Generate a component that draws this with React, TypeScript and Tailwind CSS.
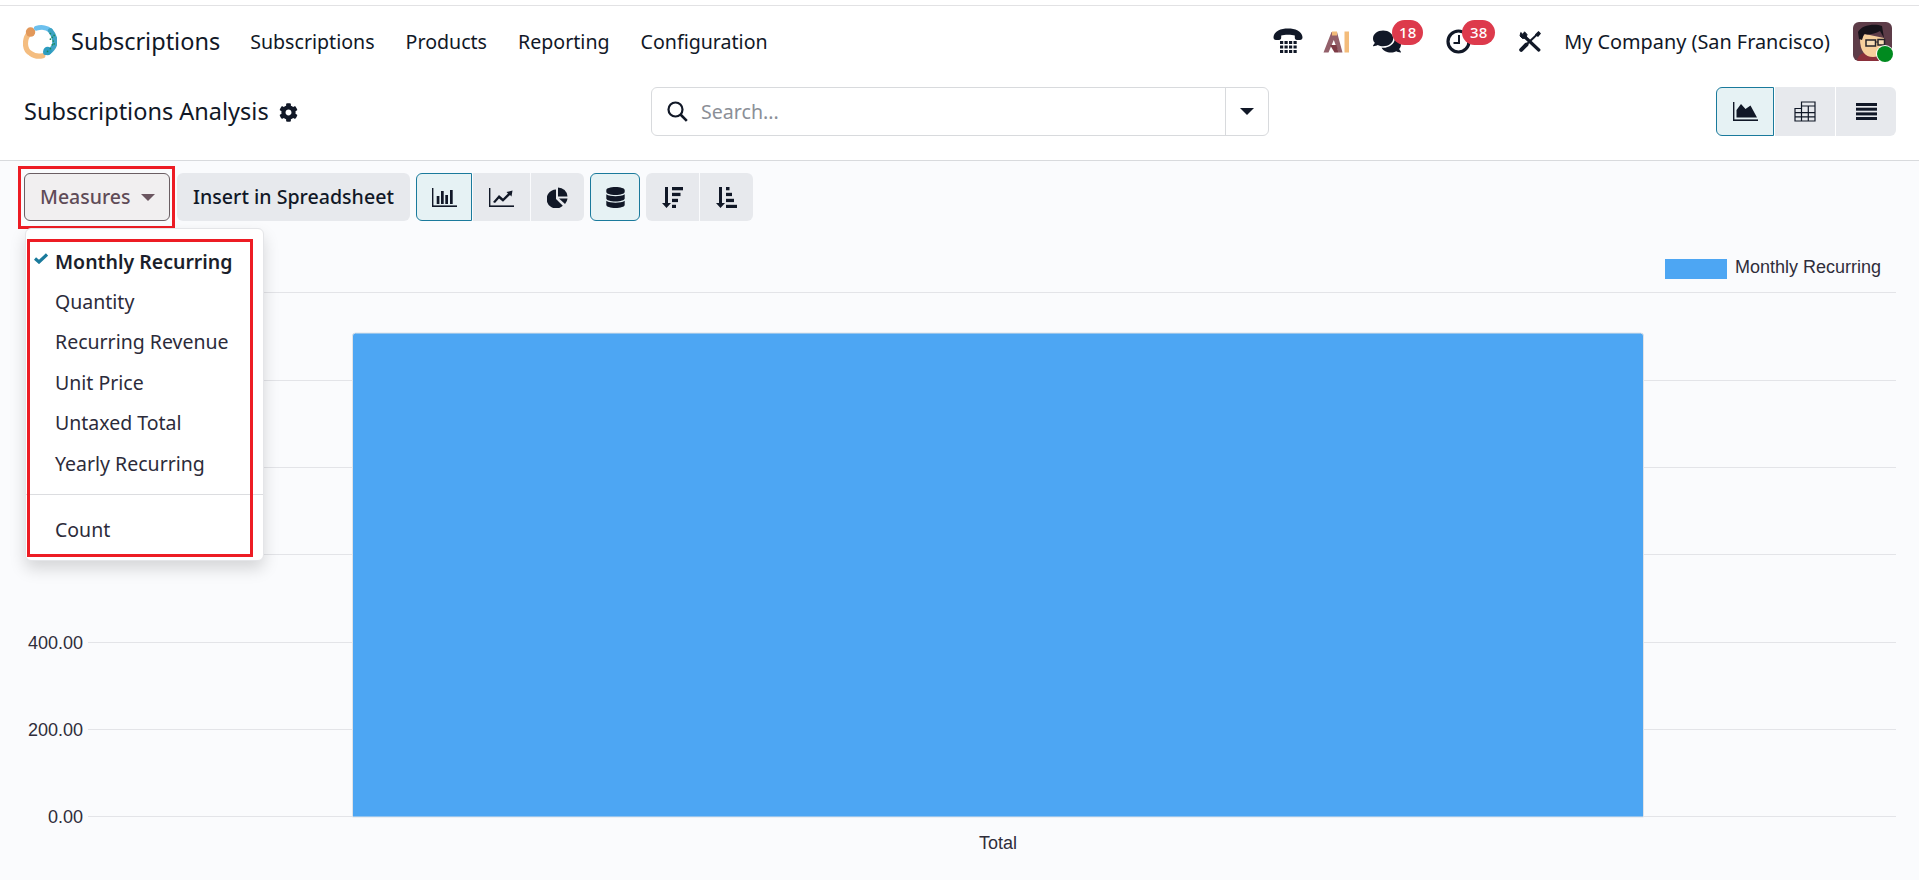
import { FaComments, FaCog, FaDatabase } from 'react-icons/fa';

const navItems = ['Subscriptions', 'Products', 'Reporting', 'Configuration'];
const measures = ['Monthly Recurring', 'Quantity', 'Recurring Revenue', 'Unit Price', 'Untaxed Total', 'Yearly Recurring'];
const ticks = [
  { y: 292.5, label: '' },
  { y: 380.5, label: '' },
  { y: 467.5, label: '' },
  { y: 554.5, label: '' },
  { y: 642.5, label: '400.00' },
  { y: 729.5, label: '200.00' },
  { y: 816.5, label: '0.00' },
];

function Logo() {
  return (
    <svg width="34" height="34" viewBox="0 0 36 36" fill="none" className="shrink-0">
      <path d="M7 8 C1 15 1 26 8 30 C12 33 17 33.500 21 32.500" stroke="#f4bd80" strokeWidth="5.500" strokeLinecap="round" />
      <circle cx="8" cy="7.500" r="5" fill="#e2985a" />
      <path d="M14 3.500 C20 1.500 26 3 29 6" stroke="#6cc0ee" strokeWidth="5" strokeLinecap="round" />
      <path d="M29 6 C35 13 35 21 31 25 C29 28 26 29 24 29" stroke="#3ea3c4" strokeWidth="5.500" strokeLinecap="round" />
      <circle cx="26" cy="27.500" r="4.500" fill="#2d9cc0" />
      <g fill="#1b8a5a">
        <circle cx="29" cy="9" r="0.900" /><circle cx="31" cy="13" r="0.900" /><circle cx="32" cy="17" r="0.900" />
        <circle cx="31" cy="21" r="0.900" /><circle cx="29" cy="25" r="0.900" /><circle cx="26" cy="28" r="0.900" />
        <circle cx="33" cy="11" r="0.900" /><circle cx="29" cy="15" r="0.900" /><circle cx="33" cy="20" r="0.900" />
      </g>
    </svg>
  );
}

function PhoneIcon() {
  return (
    <svg width="30" height="27" viewBox="0 0 30 27" fill="#111827">
      <path d="M0.500 9 C1 3 8 0.500 15 0.500 C22 0.500 29 3 29.500 9 C29.700 11 28.500 12 27 12 L24 12 C22.500 12 21.800 11 21.800 9.500 L21.800 7.500 C19 6.500 11 6.500 8.200 7.500 L8.200 9.500 C8.200 11 7.500 12 6 12 L3 12 C1.500 12 0.300 11 0.500 9 Z" />
      <g>
        {[13, 17.500, 22].map((y) =>
          [7, 11.500, 16, 20.500].map((x) => <rect key={`${x}-${y}`} x={x} y={y} width="3.200" height="3" />),
        )}
      </g>
    </svg>
  );
}

function AiIcon() {
  return (
    <svg width="27" height="22" viewBox="0 0 27 22">
      <path d="M0.500 21.500 L8.500 1 L14 1 L19.500 21.500 L15.500 21.500 L10.800 9 L5.500 21.500 Z" fill="#93606a" />
      <path d="M7 14 L13.500 14 L15.500 21.500 L11.500 21.500 Z" fill="#7d3b45" />
      <rect x="9" y="0.500" width="5" height="4" fill="#f2bb79" />
      <rect x="21.500" y="0.500" width="4.500" height="21" fill="#f3bc7b" />
    </svg>
  );
}

function ClockIcon() {
  return (
    <svg width="25" height="25" viewBox="0 0 25 25" fill="none" stroke="#111827">
      <circle cx="12.500" cy="12.500" r="10.500" strokeWidth="3.200" />
      <path d="M13 6 V14 H7.500" strokeWidth="2" />
    </svg>
  );
}

function ToolsIcon() {
  return (
    <svg width="22" height="21" viewBox="0 0 22 21" fill="none" stroke="#111827" className="ml-[48px]">
      <path d="M1.800 1.500 L1 5 L3.500 7.500 L7 7 L8 3.500 L5.500 0.800 L4 3.500 Z" fill="#111827" strokeWidth="1" />
      <path d="M6.500 6.500 L19.800 19" strokeWidth="3.200" strokeLinecap="round" />
      <path d="M8.500 12.500 L18 3.500" strokeWidth="2" />
      <path d="M16.500 4 L19.500 1 L21 2.500 L18.500 5.500" fill="#111827" strokeWidth="1.500" />
      <path d="M2.200 18.800 L7.500 13.500" strokeWidth="4" strokeLinecap="round" />
    </svg>
  );
}

function SearchIcon() {
  return (
    <svg width="21" height="21" viewBox="0 0 21 21" fill="none" stroke="#111827" strokeWidth="2.200" className="ml-[15px] shrink-0">
      <circle cx="8.500" cy="8.500" r="7" />
      <path d="M13.500 13.500 L19.800 19.800" strokeWidth="2.600" />
    </svg>
  );
}

function Badge({ value, className }: { value: string; className: string }) {
  return (
    <span className={`absolute h-[25px] rounded-full bg-[#dd3a4c] text-white text-[15px] font-medium leading-[25px] text-center ${className}`}>
      {value}
    </span>
  );
}

function Avatar() {
  return (
    <div className="relative -mt-[1px] h-[39px] w-[39px] shrink-0">
      <svg width="39" height="39" viewBox="0 0 39 39" className="rounded-md">
        <rect width="39" height="39" fill="#5d3c48" />
        <path d="M4 39 C5 32 10 30 18 30 C27 30 33 32 34 39 Z" fill="#8a2f3a" />
        <path d="M7 17 C7 29 12 35 20 35 C27 35 31 30 31 16 L12 12 Z" fill="#f6cf9c" />
        <path d="M5 10 C8 3 22 1 29 4 L31 16 L27 9 C22 12 15 13 11 12 L9 18 L6 17 Z" fill="#17131a" />
        <rect x="13" y="18" width="9.500" height="6" fill="#f6dcb4" stroke="#26242a" strokeWidth="1.500" />
        <rect x="25" y="17.500" width="6.500" height="5.500" fill="#f6dcb4" stroke="#26242a" strokeWidth="1.500" />
        <path d="M22.500 20 H25" stroke="#26242a" strokeWidth="1.200" />
      </svg>
      <span className="absolute left-[24px] top-[24px] h-[16px] w-[16px] rounded-full bg-[#008a1f] ring-1 ring-white" />
    </div>
  );
}

function BarChartIcon() {
  return (
    <svg width="25" height="19" viewBox="0 0 25 19" fill="#111827">
      <rect x="0" y="0" width="1.400" height="19" />
      <rect x="0" y="17.400" width="25" height="1.600" />
      <rect x="4.700" y="8" width="2.700" height="8" />
      <rect x="9" y="3" width="2.700" height="13" />
      <rect x="13.300" y="7" width="2.700" height="9" />
      <rect x="18" y="2" width="2.700" height="14" />
    </svg>
  );
}

function LineChartIcon() {
  return (
    <svg width="25" height="19" viewBox="0 0 25 19" fill="#111827">
      <rect x="0" y="0" width="1.400" height="19" />
      <rect x="0" y="17.400" width="25" height="1.600" />
      <path d="M4 14 L10 7 L14 10.500 L19 5.500 L17.500 4 L23.500 2.500 L22.500 8.500 L21 7 L14 13.800 L10 10.500 L6 15 Z" />
    </svg>
  );
}

function PieIcon() {
  return (
    <svg width="21" height="21" viewBox="0 0 21 21" fill="#111827">
      <path d="M9 2.500 V12 L15.800 18.800 A9.500 9.500 0 1 1 9 2.500 Z" />
      <path d="M11 0.500 A9.500 9.500 0 0 1 20.500 9.500 L11 9.500 Z" />
      <path d="M12 11.500 L20.500 11.500 A9.500 9.500 0 0 1 18 17 Z" />
    </svg>
  );
}

function SortDescIcon() {
  return (
    <svg width="21" height="21" viewBox="0 0 21 21" fill="#111827">
      <path d="M3 0 H6 V16 H9 L4.500 21 L0 16 H3 Z" />
      <rect x="10" y="0" width="11" height="3.300" />
      <rect x="10" y="5.800" width="8.500" height="3.300" />
      <rect x="10" y="11.800" width="6" height="3.300" />
      <rect x="10" y="17.800" width="4" height="3.200" />
    </svg>
  );
}

function SortAscIcon() {
  return (
    <svg width="21" height="21" viewBox="0 0 21 21" fill="#111827">
      <path d="M3 0 H6 V16 H9 L4.500 21 L0 16 H3 Z" />
      <rect x="10" y="0" width="3.500" height="3.300" />
      <rect x="10" y="5.800" width="6" height="3.300" />
      <rect x="10" y="11.800" width="8" height="3.300" />
      <rect x="10" y="17.800" width="11" height="3.200" />
    </svg>
  );
}

function AreaIcon() {
  return (
    <svg width="25" height="19" viewBox="0 0 25 19" fill="#111827">
      <rect x="0" y="0" width="1.400" height="19" />
      <rect x="0" y="17.400" width="25" height="1.600" />
      <path d="M3.500 15.500 L3.500 8 L8 2 L12.500 7 L17.500 3.500 L24 15.500 Z" />
    </svg>
  );
}

function TableIcon() {
  return (
    <svg width="22" height="21" viewBox="0 0 22 21" fill="none" stroke="#111827" strokeWidth="1.200">
      <path d="M7.500 1 H21 V20 H1 V7.500 H7.500 Z" />
      <path d="M7.500 7.500 V20 M14.300 5 V20 M1 11.700 H21 M1 15.900 H21 M7.500 5 H21" />
    </svg>
  );
}

function ListIcon() {
  return (
    <svg width="21" height="17" viewBox="0 0 21 17" fill="#111827">
      <rect width="21" height="3" />
      <rect y="4.700" width="21" height="3" />
      <rect y="9.400" width="21" height="3" />
      <rect y="14" width="21" height="3" />
    </svg>
  );
}

function Chart() {
  return (
    <svg viewBox="0 225 1919 655" className="block h-full w-full" fontFamily="'Liberation Sans', Arial, sans-serif">
      {ticks.map((t) => (
        <g key={t.y}>
          <line x1="88" x2="1896" y1={t.y} y2={t.y} stroke="#e3e4e8" strokeWidth="1" />
          {t.label && (
            <text x="83" y={t.y + 6} textAnchor="end" fontSize="18" fill="#2f2d3a">
              {t.label}
            </text>
          )}
        </g>
      ))}
      <path d="M352.500 817 V336 Q352.500 333 355.500 333 H1640.500 Q1643.500 333 1643.500 336 V817 Z" fill="#4da6f3" stroke="#dfe3e8" strokeWidth="1" />
      <rect x="1665" y="259" width="62" height="20" fill="#4da6f3" />
      <text x="1735" y="273" fontSize="18" fill="#2f2d3a">Monthly Recurring</text>
      <text x="998" y="849" textAnchor="middle" fontSize="18" fill="#2f2d3a">Total</text>
    </svg>
  );
}

export default function App() {
  return (
    <div className="flex h-[880px] w-full flex-col overflow-hidden bg-[#fafbfd] font-['Noto_Sans',sans-serif] text-[#111827]">
      <div className="h-[6px] shrink-0 border-b border-[#e2e2e4] bg-white" />

      <div className="shrink-0 bg-white border-b border-[#d8dadd]">
        <nav className="flex h-[71px] items-center pl-[23px] pr-[27px]">
          <Logo />
          <span className="ml-[14px] text-[23.5px]">Subscriptions</span>
          <div className="ml-[30px] flex gap-[31px] text-[19.6px]">
            {navItems.map((item) => (
              <span key={item}>{item}</span>
            ))}
          </div>
          <div className="ml-auto flex items-center">
            <PhoneIcon />
            <span className="ml-[20px]"><AiIcon /></span>
            <div className="relative ml-[23px] h-[25px] w-[26px]">
              <FaComments className="h-[25px] w-[28px] text-[#111827]" />
              <Badge value="18" className="-top-[9px] left-[19px] w-[31px]" />
            </div>
            <div className="relative ml-[47px] h-[25px] w-[25px]">
              <ClockIcon />
              <Badge value="38" className="-top-[9px] left-[16px] w-[33px]" />
            </div>
            <ToolsIcon />
            <span className="ml-[23px] text-[19.85px]">My Company (San Francisco)</span>
            <span className="ml-[23px]"><Avatar /></span>
          </div>
        </nav>

        <div className="grid h-[83px] grid-cols-[651px_618px_1fr] pt-[10px]">
          <div className="flex h-[49px] items-center pl-[24px] pt-[1px] text-[23.5px]">
            <span>Subscriptions Analysis</span>
            <FaCog className="ml-[10px] h-[19px] w-[19px]" />
          </div>
          <div className="flex h-[49px] items-center rounded-md border border-[#d8dadd] bg-white">
            <SearchIcon />
            <span className="ml-[13px] pt-[1px] text-[19.6px] text-[#8b8f97]">Search...</span>
            <div className="ml-auto flex h-full w-[43px] items-center justify-center border-l border-[#d8dadd]">
              <span className="h-0 w-0 border-x-[7px] border-t-[7px] border-x-transparent border-t-[#111827]" />
            </div>
          </div>
          <div className="flex justify-end pr-[23px]">
            <div className="flex h-[49px] gap-[1px]">
              <div className="flex w-[58px] items-center justify-center rounded-l-md border border-[#1a7a9c] bg-[#e6f2f4]"><AreaIcon /></div>
              <div className="flex w-[60px] items-center justify-center bg-[#e7e9ed]"><TableIcon /></div>
              <div className="flex w-[60px] items-center justify-center rounded-r-md bg-[#e7e9ed]"><ListIcon /></div>
            </div>
          </div>
        </div>
      </div>

      <div className="relative flex min-h-0 flex-1 flex-col">
        <div className="flex h-[64px] shrink-0 gap-[2px] pl-[24px] pt-[12px]">
          <div className="relative">
            <button className="flex h-[48px] w-[146px] items-center rounded-md border border-[#6b5e63] bg-[#f1eff0] pl-[15px] text-[19.5px] font-medium text-[#5f4b57]">
              Measures
              <span className="ml-[11px] h-0 w-0 border-x-[7px] border-t-[7px] border-x-transparent border-t-[#6b5660]" />
            </button>
            <div className="absolute -bottom-[4px] -left-[6px] -right-[5px] -top-[7px] border-[3px] border-[#ed1c24]" />
          </div>
          <button className="ml-[5px] h-[48px] w-[233px] rounded-md bg-[#e7e9ed] text-[19.6px] font-medium">Insert in Spreadsheet</button>
          <div className="ml-[4px] flex h-[48px] gap-[1px]">
            <div className="flex w-[56px] items-center justify-center rounded-l-md border border-[#1a7a9c] bg-[#e6f2f4]"><BarChartIcon /></div>
            <div className="flex w-[57px] items-center justify-center bg-[#e7e9ed]"><LineChartIcon /></div>
            <div className="flex w-[53px] items-center justify-center rounded-r-md bg-[#e7e9ed]"><PieIcon /></div>
          </div>
          <div className="ml-[4px] flex h-[48px] w-[50px] items-center justify-center rounded-md border border-[#1a7a9c] bg-[#e6f2f4]">
            <FaDatabase className="h-[21px] w-[19px]" />
          </div>
          <div className="ml-[4px] flex h-[48px] gap-[1px]">
            <div className="flex w-[53px] items-center justify-center rounded-l-md bg-[#e7e9ed]"><SortDescIcon /></div>
            <div className="flex w-[53px] items-center justify-center rounded-r-md bg-[#e7e9ed]"><SortAscIcon /></div>
          </div>
        </div>

        <div className="min-h-0 flex-1">
          <Chart />
        </div>

        <div className="absolute left-[25px] top-[67px] w-[239px] rounded-md border border-[#e4e5e8] bg-white pb-[11px] pt-[12px] text-[19.5px] text-[#2c2b3a] shadow-[0_8px_16px_rgba(0,0,0,0.15)]">
          {measures.map((m, i) => (
            <div key={m} className={`relative flex h-[40.4px] items-center pl-[29px] ${i === 0 ? 'font-semibold text-[#1b1f2b]' : ''}`}>
              {i === 0 && (
                <svg width="14" height="11" viewBox="0 0 14 11" className="absolute left-[8px] top-[12px]" fill="none" stroke="#1a7a9c" strokeWidth="3.200">
                  <path d="M1 5.500 L5 9 L13 1.500" />
                </svg>
              )}
              {m}
            </div>
          ))}
          <div className="mb-[14px] mt-[11px] border-t border-[#dcdde0]" />
          <div className="flex h-[40px] items-center pl-[29px]">Count</div>
          <div className="absolute left-[1px] top-[10px] h-[318px] w-[226px] border-[3px] border-[#ed1c24]" />
        </div>
      </div>
    </div>
  );
}
